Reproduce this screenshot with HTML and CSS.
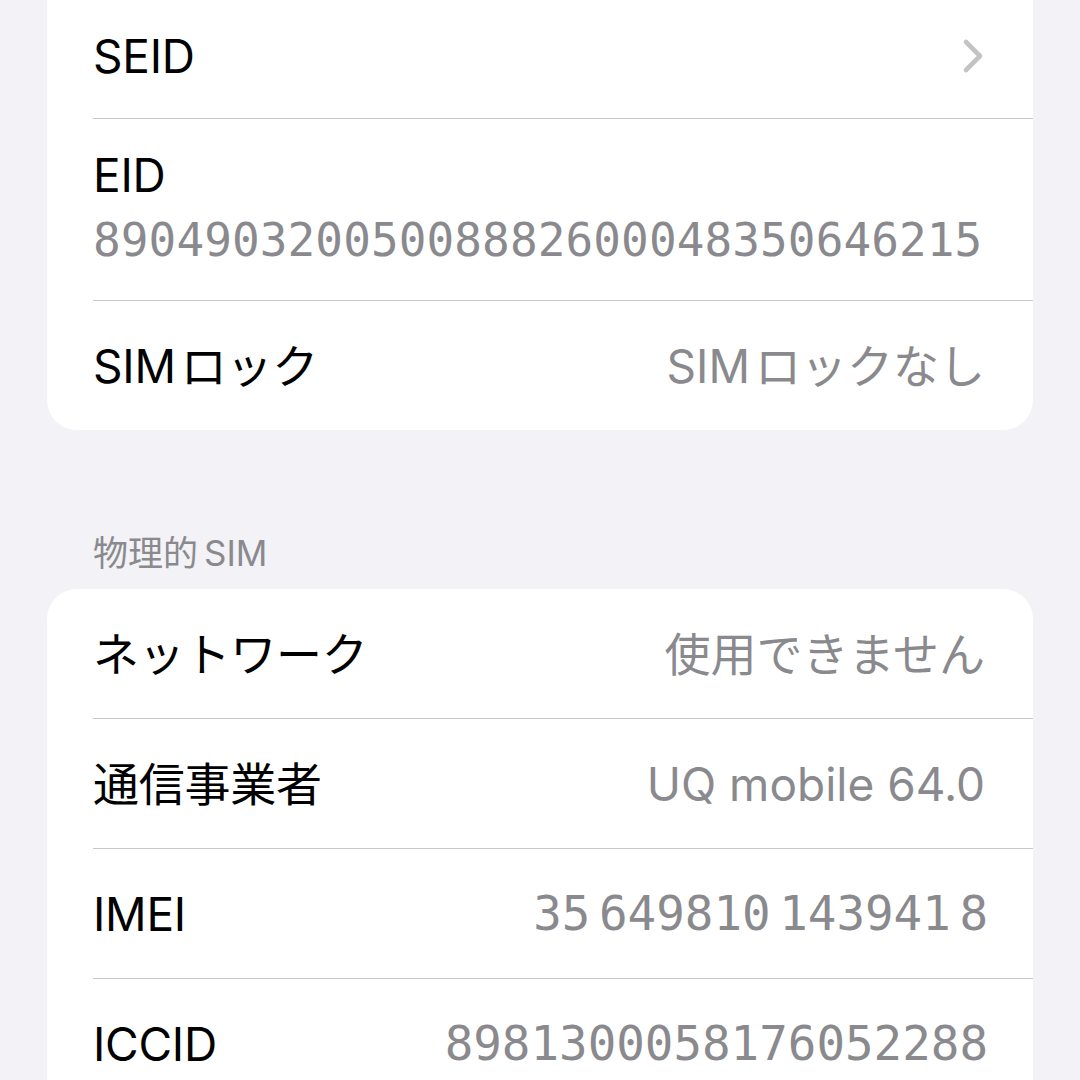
FILE: index.html
```html
<!DOCTYPE html>
<html lang="ja">
<head>
<meta charset="utf-8">
<title>SIM情報</title>
<link rel="stylesheet" href="styles.css">
</head>
<body>
<main class="page">
  <section class="card card-top">
    <div class="row row-first">
      <span class="label">SEID</span>
      <svg class="chevron" width="24" height="36" viewBox="0 0 24 36" aria-hidden="true">
        <path d="M5 4 L19 18 L5 32" fill="none" stroke="#c4c4c7" stroke-width="4.6" stroke-linecap="round" stroke-linejoin="round"/>
      </svg>
    </div>
    <div class="row row-stack">
      <span class="label">EID</span>
      <span class="mono eid">89049032005008882600048350646215</span>
    </div>
    <div class="row">
      <span class="label"><span class="latin">SIM</span>ロック</span>
      <span class="value"><span class="latin">SIM</span>ロックなし</span>
    </div>
  </section>

  <h2 class="section-title">物理的<span class="latin-after">SIM</span></h2>

  <section class="card">
    <div class="row">
      <span class="label">ネットワーク</span>
      <span class="value">使用できません</span>
    </div>
    <div class="row">
      <span class="label">通信事業者</span>
      <span class="value">UQ mobile 64.0</span>
    </div>
    <div class="row">
      <span class="label">IMEI</span>
      <span class="mono num imei">35 649810 143941 8</span>
    </div>
    <div class="row">
      <span class="label">ICCID</span>
      <span class="mono num">8981300058176052288</span>
    </div>
  </section>
</main>
</body>
</html>
```

FILE: styles.css
```css
html, body {
  margin: 0;
  padding: 0;
  background: #f2f2f7;
  overflow: hidden;
}

body {
  width: 1080px;
  height: 1080px;
  font-family: "Inter", "Noto Sans CJK JP", sans-serif;
  color: #000;
}

.page {
  padding: 0 47px;
}

.card {
  background: #fff;
  border-radius: 30px;
  overflow: hidden;
}

.card-top {
  margin-top: -60px;
  padding-top: 54px;
}

.row {
  margin-left: 46px;
  padding-right: 48px;
  height: 129px;
  display: flex;
  align-items: center;
  justify-content: space-between;
}

.row + .row {
  border-top: 1px solid #c8c8cb;
}

.row-first {
  height: 124px;
}

.row-stack {
  height: 182px;
  box-sizing: border-box;
  padding-top: 28px;
  padding-bottom: 32px;
  flex-direction: column;
  align-items: flex-start;
  justify-content: flex-start;
  gap: 9px;
}

.label {
  font-size: 46px;
  line-height: 56px;
  letter-spacing: -0.005em;
  color: #000;
}

.value {
  font-size: 46px;
  line-height: 56px;
  letter-spacing: 0;
  color: #8a8a8e;
}

.latin {
  margin-right: 5px;
}

.latin-after {
  margin-left: 6px;
}

.mono {
  font-family: "DejaVu Sans Mono", monospace;
  color: #8a8a8e;
  line-height: 56px;
}

.eid {
  font-size: 46px;
  letter-spacing: 0.1px;
}

.num {
  font-size: 47.5px;
  margin-right: -3px;
}

.imei {
  word-spacing: -20px;
}

.chevron {
  display: block;
}

.section-title {
  margin: 101px 0 14px 46px;
  font-size: 35px;
  line-height: 44px;
  font-weight: 400;
  color: #8a8a8e;
}
```
